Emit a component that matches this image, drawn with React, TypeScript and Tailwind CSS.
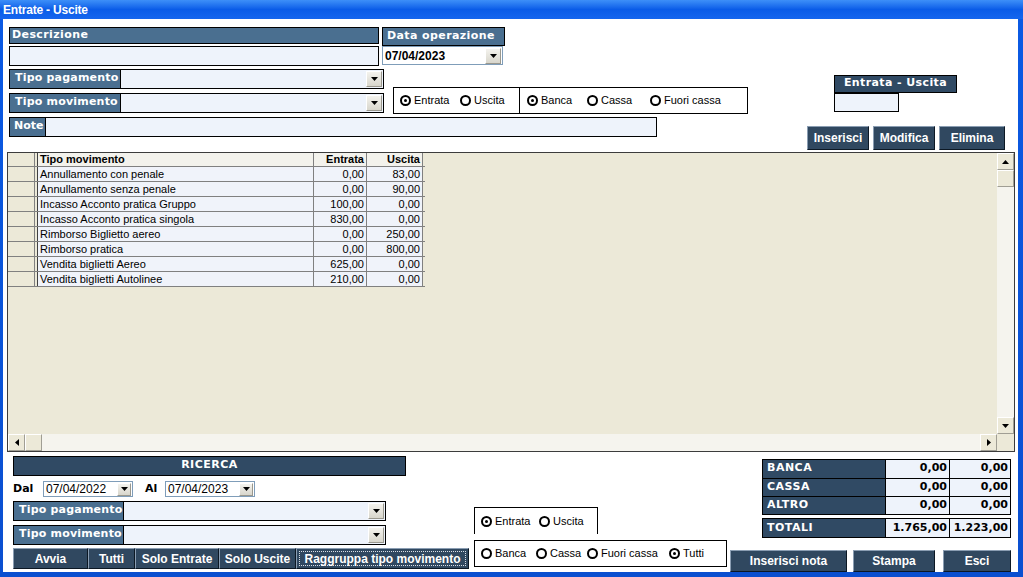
import React from 'react'

const V = "font-['DejaVu_Sans',Verdana,sans-serif]"
const A = "font-['Liberation_Sans',Arial,sans-serif]"

const ROWS = [
  ['Annullamento con penale', '0,00', '83,00'],
  ['Annullamento senza penale', '0,00', '90,00'],
  ['Incasso Acconto pratica Gruppo', '100,00', '0,00'],
  ['Incasso Acconto pratica singola', '830,00', '0,00'],
  ['Rimborso Biglietto aereo', '0,00', '250,00'],
  ['Rimborso pratica', '0,00', '800,00'],
  ['Vendita biglietti Aereo', '625,00', '0,00'],
  ['Vendita biglietti Autolinee', '210,00', '0,00'],
]

const SUMMARY = [
  ['BANCA', '0,00', '0,00'],
  ['CASSA', '0,00', '0,00'],
  ['ALTRO', '0,00', '0,00'],
]

function Tri({ dir = 'down' }: { dir?: 'down' | 'up' | 'left' | 'right' }) {
  const d = {
    down: 'M0 0h7L3.5 4z',
    up: 'M0 4h7L3.5 0z',
    left: 'M4 0v7L0 3.5z',
    right: 'M0 0v7L4 3.5z',
  }[dir]
  const vert = dir === 'down' || dir === 'up'
  return (
    <svg width={vert ? 7 : 4} height={vert ? 4 : 7}>
      <path d={d} fill="#000" />
    </svg>
  )
}

function DropBtn() {
  return (
    <div className="w-[16px] h-full flex items-center justify-center bg-gradient-to-b from-[#f4f3ee] to-[#d8d6cc] border border-t-white border-l-white border-b-[#9a988e] border-r-[#9a988e]">
      <Tri />
    </div>
  )
}

function Combo({ label, lw }: { label: string; lw: string }) {
  return (
    <div className="flex h-[20px] border border-black">
      <div className={`${lw} ${V} bg-[#4a6f90] text-white font-bold text-[11px] pl-[5px] leading-[16px] border-r border-black tracking-[0.2px] whitespace-nowrap overflow-hidden`}>
        {label}
      </div>
      <div className="flex-1 bg-[#eef3fb] flex justify-end p-[1px]">
        <DropBtn />
      </div>
    </div>
  )
}

function Radio({ on, label, cls }: { on?: boolean; label: string; cls?: string }) {
  return (
    <div className={`flex items-center gap-[3px] ${cls ?? ''}`}>
      <span className="w-[11px] h-[11px] rounded-full border-2 border-black bg-white flex items-center justify-center shrink-0">
        {on && <span className="w-[3px] h-[3px] rounded-full bg-black" />}
      </span>
      <span className={`${A} text-[11px] text-black leading-none whitespace-nowrap`}>{label}</span>
    </div>
  )
}

const BTN =
  "bg-[#304860] text-white font-bold text-[12px] whitespace-nowrap flex items-center justify-center border border-t-[#8a9db2] border-l-[#8a9db2] border-b-[#0c1824] border-r-[#0c1824] font-['Liberation_Sans',Arial,sans-serif]"

function SBtn({ dir }: { dir: 'down' | 'up' | 'left' | 'right' }) {
  return (
    <div className="w-[17px] h-[17px] shrink-0 flex items-center justify-center bg-[#ece9d8] border border-t-white border-l-white border-b-[#a09e94] border-r-[#a09e94]">
      <Tri dir={dir} />
    </div>
  )
}

function DateBox({ value }: { value: string }) {
  return (
    <div className="w-[90px] h-[16px] border border-[#7f9db9] bg-white flex items-center justify-between pl-[2px] pr-[1px]">
      <span className={`${A} text-[12px] text-black leading-none`}>{value}</span>
      <div className="h-[13px] w-[14px] flex items-center justify-center bg-gradient-to-b from-[#f4f3ee] to-[#d8d6cc] border border-t-white border-l-white border-b-[#9a988e] border-r-[#9a988e]">
        <Tri />
      </div>
    </div>
  )
}

export default function App() {
  return (
    <div className="w-[1023px] h-[577px] flex flex-col bg-gradient-to-b from-[#0b5ae4] to-[#0a4fd0] overflow-hidden">
      {/* title bar */}
      <div className="h-[19px] shrink-0 bg-gradient-to-b from-[#3d8ff8] via-[#0a5ce8] to-[#1566ee] flex items-center pl-[3px]">
        <span className={`${A} text-white font-bold text-[12px] tracking-[-0.2px]`}>Entrate - Uscite</span>
      </div>

      <div className="flex-1 ml-[3px] mr-[5px] mb-[6px] bg-white flex flex-col">
        <div className="pl-[6px] pt-[8px] flex flex-col">
          {/* row A */}
          <div className="flex items-start">
            <div className="w-[370px] flex flex-col">
              <div className={`${V} h-[17px] bg-[#4a6f90] border border-black text-white font-bold text-[11px] pl-[2px] leading-[14px] tracking-[0.4px]`}>
                Descrizione
              </div>
              <div className="mt-[2px] h-[20px] bg-[#eef3fb] border border-black" />
            </div>
            <div className="ml-[3px] w-[123px] flex flex-col">
              <div className={`${V} h-[19px] bg-[#4a6f90] border border-black text-white font-bold text-[11px] pl-[4px] leading-[15px] tracking-[0.4px]`}>
                Data operazione
              </div>
              <div className="w-[121px] h-[19px] bg-white border border-[#7f9db9] flex items-center justify-between pl-[2px] pr-[1px]">
                <span className={`${A} font-bold text-[12px] text-black`}>07/04/2023</span>
                <div className="h-[16px]">
                  <DropBtn />
                </div>
              </div>
            </div>
          </div>

          {/* row B */}
          <div className="mt-[3px] flex items-start">
            <div className="w-[375px] flex flex-col gap-[4px]">
              <Combo label="Tipo pagamento" lw="w-[111px]" />
              <Combo label="Tipo movimento" lw="w-[111px]" />
            </div>
            <div className="ml-[9px] mt-[18px] w-[355px] h-[27px] border border-black flex">
              <div className="w-[126px] border-r border-black flex items-center pl-[6px]">
                <Radio on label="Entrata" cls="w-[60px]" />
                <Radio label="Uscita" />
              </div>
              <div className="flex-1 flex items-center pl-[7px]">
                <Radio on label="Banca" cls="w-[60px]" />
                <Radio label="Cassa" cls="w-[63px]" />
                <Radio label="Fuori cassa" />
              </div>
            </div>
            <div className="ml-[86px] mt-[6px] flex flex-col">
              <div className={`${V} w-[123px] h-[18px] bg-[#304a64] border border-black text-white font-bold text-[11px] text-center leading-[14px] tracking-[0.4px]`}>
                Entrata - Uscita
              </div>
              <div className="w-[65px] h-[19px] bg-[#eef3fb] border border-black" />
            </div>
          </div>

          {/* row C */}
          <div className="mt-[3px] flex items-start">
            <div className="w-[648px] h-[20px] flex border border-black">
              <div className={`${V} w-[36px] bg-[#4a6f90] border-r border-black text-white font-bold text-[11px] pl-[4px] leading-[15px]`}>
                Note
              </div>
              <div className="flex-1 bg-[#eef3fb]" />
            </div>
            <div className="ml-[150px] mt-[9px] flex gap-[4px]">
              <div className={`${BTN} w-[62px] h-[24px]`}>Inserisci</div>
              <div className={`${BTN} w-[62px] h-[24px]`}>Modifica</div>
              <div className={`${BTN} w-[66px] h-[24px]`}>Elimina</div>
            </div>
          </div>
        </div>

        {/* grid */}
        <div className="ml-[4px] mt-[2px] w-[1008px] h-[300px] border border-[#3c3c3c] bg-[#ece9d8] flex flex-col">
          <div className="flex-1 flex min-h-0">
            <div className="flex-1">
              <div className={`${A} text-[11px] text-black flex flex-col w-[417px]`}>
                <div className="flex h-[14px] border-b border-[#808080]">
                  <div className="w-[27px] border-r border-[#808080]" />
                  <div className="w-[3px] border-r border-[#404040]" />
                  <div className="w-[276px] border-r border-[#808080] bg-[#f3f2ec] pl-[2px] font-bold leading-[13px]">Tipo movimento</div>
                  <div className="w-[53px] border-r border-[#808080] bg-[#f3f2ec] pr-[2px] text-right font-bold leading-[13px]">Entrata</div>
                  <div className="w-[56px] border-r border-[#808080] bg-[#f3f2ec] pr-[2px] text-right font-bold leading-[13px]">Uscita</div>
                </div>
                {ROWS.map((r) => (
                  <div key={r[0]} className="flex h-[15px] border-b border-[#808080]">
                    <div className="w-[27px] border-r border-[#808080]" />
                    <div className="w-[3px] border-r border-[#404040]" />
                    <div className="w-[276px] border-r border-[#808080] bg-[#f0f3fa] pl-[2px] leading-[15px]">{r[0]}</div>
                    <div className="w-[53px] border-r border-[#808080] bg-[#f0f3fa] pr-[2px] text-right leading-[15px]">{r[1]}</div>
                    <div className="w-[56px] border-r border-[#808080] bg-[#f0f3fa] pr-[2px] text-right leading-[15px]">{r[2]}</div>
                  </div>
                ))}
              </div>
            </div>
            <div className="w-[17px] flex flex-col bg-[#f5f4ee]">
              <SBtn dir="up" />
              <div className="h-[17px] bg-[#ece9d8] border border-t-white border-l-white border-b-[#a09e94] border-r-[#a09e94]" />
              <div className="flex-1" />
              <SBtn dir="down" />
            </div>
          </div>
          <div className="h-[17px] flex bg-[#f5f4ee]">
            <SBtn dir="left" />
            <div className="w-[17px] bg-[#ece9d8] border border-t-white border-l-white border-b-[#a09e94] border-r-[#a09e94]" />
            <div className="flex-1" />
            <SBtn dir="right" />
            <div className="w-[17px] bg-[#ece9d8]" />
          </div>
        </div>

        {/* bottom */}
        <div className="mt-[4px] ml-[10px] flex items-start">
          <div className="w-[456px] flex flex-col">
            <div className={`${V} w-[393px] h-[20px] bg-[#304a64] border border-black text-white font-bold text-[11px] text-center leading-[16px] tracking-[0.5px]`}>
              RICERCA
            </div>
            <div className="mt-[5px] h-[16px] flex items-center">
              <span className={`${V} w-[30px] font-bold text-[11px] text-black`}>Dal</span>
              <DateBox value="07/04/2022" />
              <span className={`${V} ml-[12px] w-[20px] font-bold text-[11px] text-black`}>Al</span>
              <DateBox value="07/04/2023" />
            </div>
            <div className="mt-[4px] w-[373px] flex flex-col gap-[4px]">
              <Combo label="Tipo pagamento" lw="w-[110px]" />
              <Combo label="Tipo movimento" lw="w-[110px]" />
            </div>
            <div className="mt-[3px] h-[21px] flex">
              <div className={`${BTN} ${V} w-[75px] text-[11px]`}>Avvia</div>
              <div className={`${BTN} w-[47px]`}>Tutti</div>
              <div className={`${BTN} w-[84px]`}>Solo Entrate</div>
              <div className={`${BTN} w-[77px]`}>Solo Uscite</div>
              <div className={`${BTN} w-[173px] p-[2px]`}>
                <div className="w-full h-full border border-dotted border-[#d8dee6] flex items-center justify-center">
                  Raggruppa tipo movimento
                </div>
              </div>
            </div>
          </div>

          <div className="ml-[5px] w-[253px] flex flex-col">
            <div className="mt-[51px] w-[124px] h-[27px] border border-b-0 border-black flex items-center pl-[6px]">
              <Radio on label="Entrata" cls="w-[58px]" />
              <Radio label="Uscita" />
            </div>
            <div className="mt-[6px] h-[27px] border border-black flex items-center pl-[6px]">
              <Radio label="Banca" cls="w-[55px]" />
              <Radio label="Cassa" cls="w-[51px]" />
              <Radio label="Fuori cassa" cls="w-[82px]" />
              <Radio on label="Tutti" />
            </div>
          </div>

          <div className="ml-[3px] w-[281px] flex flex-col">
            <div className={`${V} ml-[32px] mt-[3px] w-[249px] flex flex-col text-[11px] font-bold`}>
              <div className="border border-black flex flex-col">
                {SUMMARY.map((s, i) => (
                  <div key={s[0]} className={`flex h-[18px] ${i > 0 ? 'border-t border-black' : ''}`}>
                    <div className="w-[123px] bg-[#304a64] text-white pl-[4px] leading-[16px] tracking-[0.5px] border-r border-black">{s[0]}</div>
                    <div className="w-[64px] bg-[#eef3fb] text-black text-right pr-[2px] leading-[16px] border-r border-black">{s[1]}</div>
                    <div className="flex-1 bg-[#eef3fb] text-black text-right pr-[2px] leading-[16px]">{s[2]}</div>
                  </div>
                ))}
              </div>
              <div className="mt-[3px] h-[20px] border border-black flex">
                <div className="w-[123px] bg-[#304a64] text-white pl-[4px] leading-[17px] tracking-[0.5px] border-r border-black">TOTALI</div>
                <div className="w-[64px] bg-[#eef3fb] text-black text-right pr-[2px] leading-[17px] border-r border-black">1.765,00</div>
                <div className="flex-1 bg-[#eef3fb] text-black text-right pr-[2px] leading-[17px]">1.223,00</div>
              </div>
            </div>
            <div className="mt-[12px] flex">
              <div className={`${BTN} w-[117px] h-[22px]`}>Inserisci nota</div>
              <div className={`${BTN} ml-[6px] w-[82px] h-[22px]`}>Stampa</div>
              <div className={`${BTN} ml-[8px] w-[68px] h-[22px]`}>Esci</div>
            </div>
          </div>
        </div>
      </div>
    </div>
  )
}
